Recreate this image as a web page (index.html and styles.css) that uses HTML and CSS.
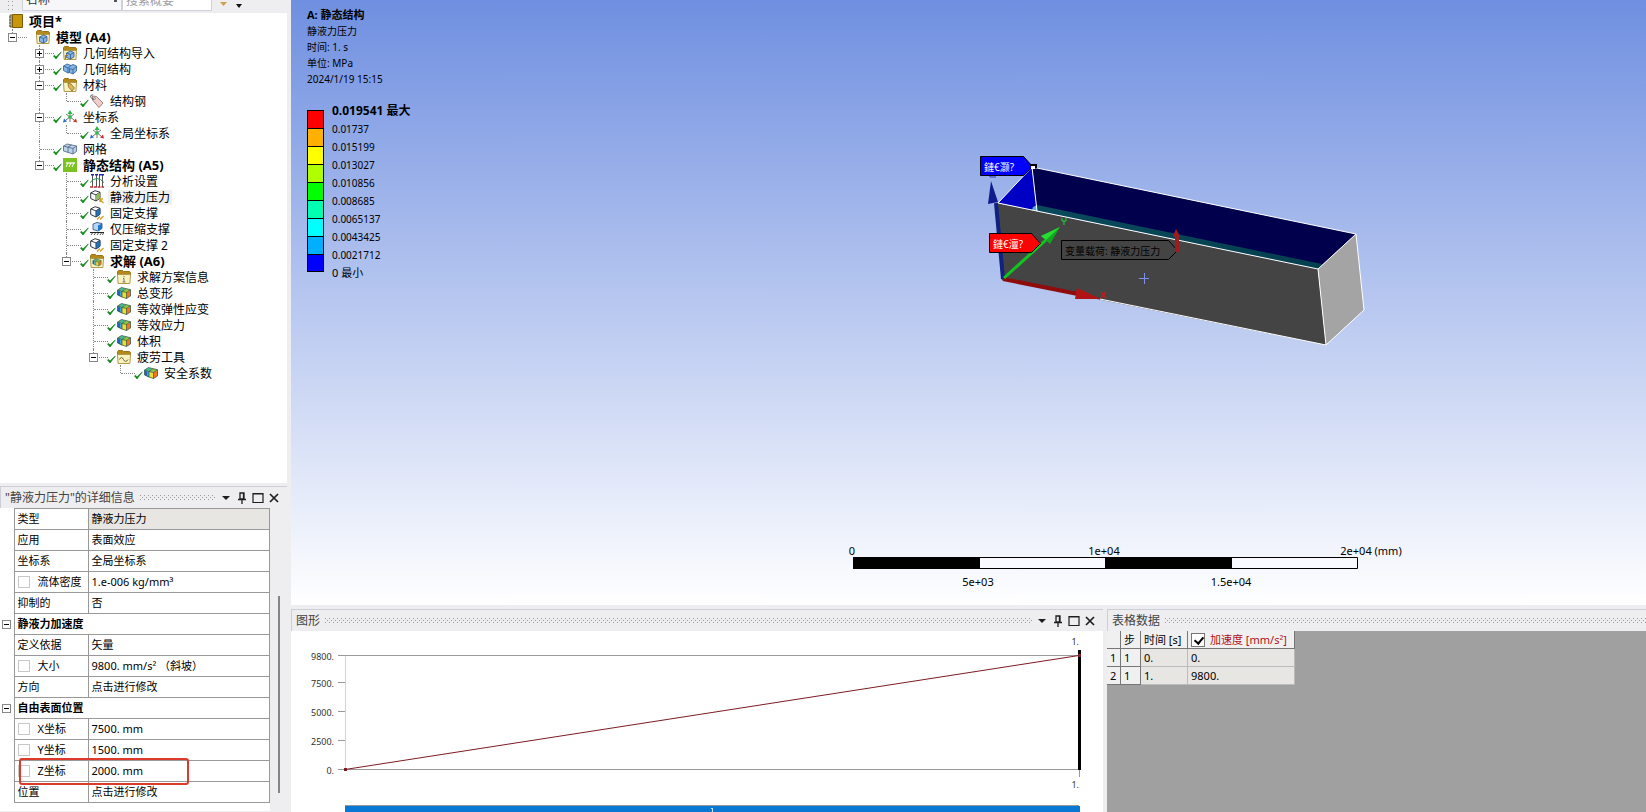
FILE: index.html
```html
<!DOCTYPE html>
<html lang="zh-CN">
<head>
<meta charset="utf-8">
<title>静态结构</title>
<link rel="stylesheet" href="styles.css">
</head>
<body>
<svg class="defs" aria-hidden="true">
  <symbol id="book" viewBox="0 0 14 14"><path d="M1 1h2v12H1z" fill="#e8dcc0" stroke="#665"/><path d="M3.500 .500h10v13h-10z" fill="#c8960a" stroke="#7a5a08"/><path d="M0 3h2M0 6h2M0 9h2M0 12h2" stroke="#555"/></symbol>
  <symbol id="folder" viewBox="0 0 14 14"><path d="M.500 5V1.500l1-1h4l1 1h6l1 1V5z" fill="#b48a1c" stroke="#9a7418"/><path d="M.500 4.500h13l-.600 9H1.100z" fill="#faf3bf" stroke="#b09a50"/></symbol>
  <symbol id="cube-mini" viewBox="0 0 14 14"><path d="M3.500 7l4-2L11 6.500v4.500L7.500 13l-4-1.500z" fill="#86b4e4" stroke="#305c91" stroke-width=".8"/><path d="M3.500 7l4 1.500L11 6.500M7.500 8.500V13" fill="none" stroke="#305c91" stroke-width=".8"/></symbol>
  <symbol id="model" viewBox="0 0 14 14"><use href="#folder"/><use href="#cube-mini"/></symbol>
  <symbol id="import" viewBox="0 0 14 14"><use href="#folder"/><use href="#cube-mini"/><path d="M2.500 13V9.500H5" fill="none" stroke="#b87818" stroke-width="1.200"/></symbol>
  <symbol id="geometry" viewBox="0 0 14 14"><path d="M.500 4L4 2l4 1.500 2-1 3.500 1.500v5L10 12 6.500 10.500 5 11 .500 8.500z" fill="#86b4e4" stroke="#305c91" stroke-width=".8"/><path d="M.500 4L5 6l3-2.500M5 6v5M6.500 6.500L10 7.500l3.500-3M10 7.500V12M6.500 6.500v4" fill="none" stroke="#305c91" stroke-width=".8"/></symbol>
  <symbol id="mesh" viewBox="0 0 14 14"><path d="M.500 4L4 2l9.500 2v5.500L10 12 .500 9z" fill="#bdd2e8" stroke="#4a6280" stroke-width=".8"/><path d="M.500 4L10 6.500l3.500-2.500M10 6.500V12M5 5v5.500M5 5l3.500-2" fill="none" stroke="#4a6280" stroke-width=".8"/></symbol>
  <symbol id="material" viewBox="0 0 14 14"><use href="#folder"/><path d="M5 5l3 1 3.500 4L9 13 5.500 9z" fill="#e0b45a" stroke="#8a6a20" stroke-width=".8"/></symbol>
  <symbol id="tag" viewBox="0 0 14 14"><path d="M2.500 2l4 .500 6.500 6.500-4 4.500L2.500 6z" fill="#eecdca" stroke="#8a6a68" stroke-width=".8"/><path d="M3 .800q-3 0-2.300 2.200T4 5.500" fill="none" stroke="#555" stroke-width=".9"/><circle cx="4.500" cy="4.500" r=".9" fill="#fff" stroke="#555" stroke-width=".6"/></symbol>
  <symbol id="axes" viewBox="0 0 14 14"><path d="M3 4l8 6M11 4l-8 6M7 3v9" stroke="#666" stroke-width=".9"/><path d="M4.500 4L7 0l2.500 4z" fill="#24b83c"/><circle cx="7" cy="7" r="1.800" fill="#24c050"/><path d="M0 12.500l1-4 3 3z" fill="#2a6fd0"/><path d="M14 12.500l-1-4-3 3z" fill="#d02a2a"/></symbol>
  <symbol id="static" viewBox="0 0 14 14"><path d="M0 0h14v14H0z" fill="#7cc222"/><path d="M3 5h9" stroke="#fff" stroke-width="1.300"/><path d="M5 5L3 9M8 5L6 9M11 5L9 9" stroke="#fff"/></symbol>
  <symbol id="settings" viewBox="0 0 14 14"><path d="M2.500 1v12M6.500 1v12M9.500 1v12M12.500 1v12" stroke="#444" stroke-width=".9"/><path d="M1 .800h3M5 .800h3M9 .800h5" stroke="#22b" stroke-width="1.500"/><path d="M0 13h14" stroke="#b33" stroke-width="1.500" stroke-dasharray="3 .8"/><path d="M0 8.500q7-8 14 0" fill="none" stroke="#2a9a4a"/></symbol>
  <symbol id="cube" viewBox="0 0 14 14"><path d="M.700 3L5 .700l5 1.500v6L6 11 .700 8.500z" fill="#fff" stroke="#303840"/><path d="M.700 3L6 4.800l4-2.600M6 4.800V11" fill="none" stroke="#303840" stroke-width=".9"/></symbol>
  <symbol id="hydro" viewBox="0 0 14 14"><use href="#cube"/><path d="M6.500 5l3-2v5l-3 2z" fill="#8dbf4a"/><path d="M13.500 13L10 9.500M10 12V9h3" fill="none" stroke="#d8a020" stroke-width="1.400"/></symbol>
  <symbol id="fixed" viewBox="0 0 14 14"><use href="#cube"/><path d="M6.300 5l3.500-2.500v6l-3.500 2z" fill="#1f74c8" stroke="#154a80" stroke-width=".7"/><path d="M7 13.500l3-3M10 13.500l3.500-3.500" stroke="#d89820" stroke-width="1.200"/></symbol>
  <symbol id="compress" viewBox="0 0 14 14"><path d="M3 2l4-1.500 5 1v5L8 9 3 7.500z" fill="#b4d8f6" stroke="#27496f" stroke-width=".8"/><path d="M8 3.500l4-2v5L8 9z" fill="#1f74c8"/><path d="M0 10.500h14" stroke="#222"/><path d="M1 13l1.500-2M4 13l1.500-2M7 13l1.500-2M10 13l1.500-2M12.500 13l1-2" stroke="#444" stroke-width=".9"/></symbol>
  <symbol id="result" viewBox="0 0 14 14"><path d="M.500 4L3 5.300v5L.500 9z" fill="#2860c8"/><path d="M3 5.300l2 .700v5.500l-2-1.200z" fill="#2fa8d8"/><path d="M.500 4L4.500 1.500 8 2.500 5 6z" fill="#48b890"/><path d="M5 5.500l4-3 4.500 1.200-4 2.800z" fill="#8cc840"/><path d="M5 5.500l4.500 1V12.500L5 11z" fill="#f0dc30"/><path d="M9.500 6.500l4-2.800V10l-4 2.500z" fill="#ee7820"/><path d="M.500 4l4-2.500 4 1 5 1.200V10l-4 2.500L5 11 .500 9zM5 11V5.500l4-3M5 5.500l4.500 1 4-2.800M9.500 6.500v6M.500 4L5 5.800" fill="none" stroke="#2c5040" stroke-width=".7"/></symbol>
  <symbol id="solution" viewBox="0 0 14 14"><use href="#folder"/><use href="#result" x="2" y="4" width="10" height="9"/></symbol>
  <symbol id="info" viewBox="0 0 14 14"><use href="#folder"/><path d="M7 6v1.300M7 8.500V12M5.500 12h3M6 8.500h1" stroke="#777" fill="none"/></symbol>
  <symbol id="fatigue" viewBox="0 0 14 14"><use href="#folder"/><path d="M2.500 9.500q2-4 4 0t4.500 0" stroke="#6a6030" fill="none"/></symbol>
  <symbol id="check" viewBox="0 0 9 9"><path d="M.500 5l2.500 3L8.300 1 3 5.800 1.500 4.300z" fill="#138a1b" stroke="#138a1b" stroke-width=".7"/></symbol>
  <symbol id="drop" viewBox="0 0 16 16"><path d="M4 6h8l-4 4z" fill="#1e1e1e"/></symbol>
  <symbol id="pin" viewBox="0 0 16 16"><path d="M6 3h4v6H6zM4 9.500h8M8 10v4M9.500 3v6" fill="none" stroke="#1e1e1e" stroke-width="1.300"/></symbol>
  <symbol id="max" viewBox="0 0 16 16"><path d="M3 3.500h10v9H3z" fill="none" stroke="#1e1e1e" stroke-width="1.200"/><path d="M3 4h10" stroke="#1e1e1e"/></symbol>
  <symbol id="close" viewBox="0 0 16 16"><path d="M4 4l8 8M12 4l-8 8" stroke="#1e1e1e" stroke-width="1.700"/></symbol>
</svg>
<div class="app">
  <aside class="side">
    <div class="toolbar">
      <span class="grip"></span>
      <select class="filter" aria-label="筛选"><option>名称</option></select>
      <input class="search" type="text" placeholder="搜索概要" aria-label="搜索概要">
      <button class="tool" aria-label="清除"><svg viewBox="0 0 16 16"><path d="M5 7h7l-3.500 4z" fill="#c9a24a"/></svg></button>
      <button class="tool" aria-label="更多"><svg viewBox="0 0 16 16"><path d="M2 9h6l-3 4z" fill="#111"/></svg></button>
    </div>
    <nav class="tree" aria-label="项目">
      <div class="row root"><svg class="ico"><use href="#book"/></svg><b>项目*</b></div>
      <ul>
        <li class="top"><div class="row"><button class="exp" aria-label="折叠"></button><svg class="ico"><use href="#model"/></svg><b>模型 (A4)</b></div>
          <ul>
            <li><div class="row"><button class="exp plus" aria-label="展开"></button><svg class="chk"><use href="#check"/></svg><svg class="ico"><use href="#import"/></svg><span>几何结构导入</span></div></li>
            <li><div class="row"><button class="exp plus" aria-label="展开"></button><svg class="chk"><use href="#check"/></svg><svg class="ico"><use href="#geometry"/></svg><span>几何结构</span></div></li>
            <li><div class="row"><button class="exp" aria-label="折叠"></button><svg class="chk"><use href="#check"/></svg><svg class="ico"><use href="#material"/></svg><span>材料</span></div>
              <ul><li><div class="row"><svg class="chk"><use href="#check"/></svg><svg class="ico"><use href="#tag"/></svg><span>结构钢</span></div></li></ul></li>
            <li><div class="row"><button class="exp" aria-label="折叠"></button><svg class="chk"><use href="#check"/></svg><svg class="ico"><use href="#axes"/></svg><span>坐标系</span></div>
              <ul><li><div class="row"><svg class="chk"><use href="#check"/></svg><svg class="ico"><use href="#axes"/></svg><span>全局坐标系</span></div></li></ul></li>
            <li><div class="row"><svg class="chk"><use href="#check"/></svg><svg class="ico"><use href="#mesh"/></svg><span>网格</span></div></li>
            <li><div class="row"><button class="exp" aria-label="折叠"></button><svg class="chk"><use href="#check"/></svg><svg class="ico"><use href="#static"/></svg><b>静态结构 (A5)</b></div>
              <ul>
                <li><div class="row"><svg class="chk"><use href="#check"/></svg><svg class="ico"><use href="#settings"/></svg><span>分析设置</span></div></li>
                <li><div class="row"><svg class="chk"><use href="#check"/></svg><svg class="ico"><use href="#hydro"/></svg><span class="sel">静液力压力</span></div></li>
                <li><div class="row"><svg class="chk"><use href="#check"/></svg><svg class="ico"><use href="#fixed"/></svg><span>固定支撑</span></div></li>
                <li><div class="row"><svg class="chk"><use href="#check"/></svg><svg class="ico"><use href="#compress"/></svg><span>仅压缩支撑</span></div></li>
                <li><div class="row"><svg class="chk"><use href="#check"/></svg><svg class="ico"><use href="#fixed"/></svg><span>固定支撑 2</span></div></li>
                <li><div class="row"><button class="exp" aria-label="折叠"></button><svg class="chk"><use href="#check"/></svg><svg class="ico"><use href="#solution"/></svg><b>求解 (A6)</b></div>
                  <ul>
                    <li><div class="row"><svg class="chk"><use href="#check"/></svg><svg class="ico"><use href="#info"/></svg><span>求解方案信息</span></div></li>
                    <li><div class="row"><svg class="chk"><use href="#check"/></svg><svg class="ico"><use href="#result"/></svg><span>总变形</span></div></li>
                    <li><div class="row"><svg class="chk"><use href="#check"/></svg><svg class="ico"><use href="#result"/></svg><span>等效弹性应变</span></div></li>
                    <li><div class="row"><svg class="chk"><use href="#check"/></svg><svg class="ico"><use href="#result"/></svg><span>等效应力</span></div></li>
                    <li><div class="row"><svg class="chk"><use href="#check"/></svg><svg class="ico"><use href="#result"/></svg><span>体积</span></div></li>
                    <li><div class="row"><button class="exp" aria-label="折叠"></button><svg class="chk"><use href="#check"/></svg><svg class="ico"><use href="#fatigue"/></svg><span>疲劳工具</span></div>
                      <ul><li><div class="row"><svg class="chk"><use href="#check"/></svg><svg class="ico"><use href="#result"/></svg><span>安全系数</span></div></li></ul></li>
                  </ul></li>
              </ul></li>
          </ul></li>
      </ul>
    </nav>
    <section class="details">
      <header class="bar"><h2>"静液力压力"的详细信息</h2><span class="dots"></span>
        <button aria-label="菜单"><svg><use href="#drop"/></svg></button><button aria-label="固定"><svg><use href="#pin"/></svg></button><button aria-label="最大化"><svg><use href="#max"/></svg></button><button aria-label="关闭"><svg><use href="#close"/></svg></button></header>
      <div class="props-wrap">
        <table class="props">
          <tr><td class="gut"></td><th>类型</th><td class="ro">静液力压力</td></tr>
          <tr><td class="gut"></td><th>应用</th><td>表面效应</td></tr>
          <tr><td class="gut"></td><th>坐标系</th><td>全局坐标系</td></tr>
          <tr><td class="gut"></td><th><label><input type="checkbox">流体密度</label></th><td>1.e-006 kg/mm³</td></tr>
          <tr><td class="gut"></td><th>抑制的</th><td>否</td></tr>
          <tr><td class="gut"><button class="exp" aria-label="折叠"></button></td><th class="group" colspan="2">静液力加速度</th></tr>
          <tr><td class="gut"></td><th>定义依据</th><td>矢量</td></tr>
          <tr><td class="gut"></td><th><label><input type="checkbox">大小</label></th><td>9800. mm/s² （斜坡）</td></tr>
          <tr><td class="gut"></td><th>方向</th><td>点击进行修改</td></tr>
          <tr><td class="gut"><button class="exp" aria-label="折叠"></button></td><th class="group" colspan="2">自由表面位置</th></tr>
          <tr><td class="gut"></td><th><label><input type="checkbox">X坐标</label></th><td>7500. mm</td></tr>
          <tr><td class="gut"></td><th><label><input type="checkbox">Y坐标</label></th><td>1500. mm</td></tr>
          <tr><td class="gut"></td><th class="marked"><label><input type="checkbox">Z坐标</label></th><td>2000. mm</td></tr>
          <tr><td class="gut"></td><th>位置</th><td>点击进行修改</td></tr>
        </table>
        <div class="scroll"><span></span></div>
      </div>
    </section>
  </aside>
  <main class="main">
    <section class="view">
      <svg class="scene" viewBox="291 0 1355 605" role="img" aria-label="静液力压力">
        <defs><linearGradient id="teal" x1="0" x2="1"><stop offset="0" stop-color="#0a4a5c"/><stop offset="1" stop-color="#04404e"/></linearGradient></defs>
        <path d="M1032 167L1356 234 1318 269 1037 211z" fill="#00004c"/>
        <path d="M1037 205L1322 264 1318 269 1037 211z" fill="url(#teal)"/>
        <path d="M1032 167L998 203 1037 211z" fill="#0000c4"/>
        <path d="M1033 207l4-2v6l-5-1z" fill="#58a8d8"/>
        <path d="M997 203L1318 269 1326 345 1002 280z" fill="#444"/>
        <path d="M1318 269L1356 234 1364 310 1326 345z" fill="#a4a4a4"/>
        <path d="M998 203L1032 167 1356 234 1318 269zM1318 269L1326 345 1364 310 1356 234M1326 345L1100 299M1032 167L1037 211" fill="none" stroke="#fff"/>
        <path d="M1003 279L996 203" stroke="#12207e" stroke-width="4"/>
        <path d="M991 181L988 204 998 202z" fill="#101c8c"/>
        <path d="M990 174v3h6" stroke="#2038c8" fill="none"/>
        <path d="M1003 279L1078 294" stroke="#8e0c0c" stroke-width="4"/>
        <path d="M1077 288L1101 299 1075 299z" fill="#b01414"/>
        <path d="M1004 278L1046 240" stroke="#12c420" stroke-width="3"/>
        <path d="M1041 236L1060 227 1050 244z" fill="#0fa81c"/><path d="M1041 236L1060 227 1046 240z" fill="#28dc34"/>
        <path d="M1062 218v3h4v-3M1064 221v4" fill="none" stroke="#20d038"/>
        <path d="M1101 292l5 6M1106 292l-5 6" stroke="#c01c1c" stroke-width="1.500"/>
        <path d="M1061.500 240.500h107l9 10-9 9h-107z" fill="#444" stroke="#000"/>
        <text x="1065" y="255" class="note">变量载荷: 静液力压力</text>
        <path d="M1176 229l-3 7 2 1v15h4v-15l1-1z" fill="#9c1c20"/>
        <path d="M980.500 156.500h43l9 10-9 9h-43z" fill="#00f" stroke="#000"/>
        <path d="M1030 165h6v3" stroke="#000" stroke-width="2" fill="none"/><path d="M1031 166h4v3h-4z" fill="#fff"/>
        <text x="984" y="171" class="flag">鏈€灏?</text>
        <path d="M989.500 233.500h42l9 10-9 9h-42z" fill="#f00" stroke="#000"/>
        <text x="993" y="248" class="flag">鏈€澶?</text>
        <path d="M1139 278.500h10M1144.500 273v11" stroke="#7c92e8"/>
        <path d="M853.500 557.500h504v11h-504z" fill="#f8faff" stroke="#000"/>
        <path d="M853 557h127v12H853zM1105 557h127v12h-127z"/>
        <g class="rule"><text x="852" y="555">0</text><text x="1104" y="555">1e+04</text><text x="1371" y="555">2e+04 (mm)</text><text x="978" y="586">5e+03</text><text x="1231" y="586">1.5e+04</text></g>
      </svg>
      <div class="info">
        <p class="strong">A: 静态结构</p><p>静液力压力</p><p>时间: 1. s</p><p>单位: MPa</p><p>2024/1/19 15:15</p>
        <div class="legend">
          <div class="swatches"><i class="c1"></i><i class="c2"></i><i class="c3"></i><i class="c4"></i><i class="c5"></i><i class="c6"></i><i class="c7"></i><i class="c8"></i><i class="c9"></i></div>
          <ul><li class="top-value">0.019541 最大</li><li>0.01737</li><li>0.015199</li><li>0.013027</li><li>0.010856</li><li>0.008685</li><li>0.0065137</li><li>0.0043425</li><li>0.0021712</li><li class="min">0 最小</li></ul>
        </div>
      </div>
    </section>
    <div class="bottom">
      <section class="graph">
        <header class="bar"><h2>图形</h2><span class="dots"></span>
          <button aria-label="菜单"><svg><use href="#drop"/></svg></button><button aria-label="固定"><svg><use href="#pin"/></svg></button><button aria-label="最大化"><svg><use href="#max"/></svg></button><button aria-label="关闭"><svg><use href="#close"/></svg></button></header>
        <svg class="plot" viewBox="291 631 812 181" role="img" aria-label="加速度">
          <path d="M345.500 655v115" stroke="#d4d4d4"/>
          <path d="M338 655.500h742M338 682.500h7M338 711.500h7M338 740.500h7M338 769.500h742M1079.500 769v8" stroke="#999" fill="none"/>
          <path d="M1079.500 650v120" stroke="#000" stroke-width="3"/>
          <path d="M345 769.500L1079 655.500" stroke="#7c1c24"/>
          <path d="M344 768h3v3h-3zM1078 654h3v3h-3z" fill="#7c1c24"/>
          <g class="ylab"><text x="334" y="660">9800.</text><text x="334" y="687">7500.</text><text x="334" y="716">5000.</text><text x="334" y="745">2500.</text><text x="334" y="774">0.</text><text x="1079" y="645">1.</text><text x="1079" y="788">1.</text></g>
          <path d="M345 806h735v6H345z" fill="#0878d4"/>
          <path d="M345 805.500h734" stroke="#9a9a9a"/>
          <path d="M712.500 808v4M711 809l1-1" stroke="#cfe4f8"/>
        </svg>
      </section>
      <section class="data">
        <header class="bar"><h2>表格数据</h2><span class="dots"></span></header>
        <div class="data-body">
          <table class="grid">
            <tr><th></th><th>步</th><th>时间 [s]</th><th class="acc"><label><input type="checkbox" checked>加速度 [mm/s²]</label></th></tr>
            <tr><th>1</th><th>1</th><td>0.</td><td>0.</td></tr>
            <tr><th>2</th><th>1</th><td>1.</td><td>9800.</td></tr>
          </table>
        </div>
      </section>
    </div>
  </main>
</div>
</body>
</html>
```
FILE: styles.css
```css
* { box-sizing: border-box; }
body { margin: 0; background: #eeeef0; color: #000; font: 12px/16px "Noto Sans", "Noto Sans CJK SC", sans-serif; }
ul, p, h2 { margin: 0; padding: 0; list-style: none; font-size: inherit; font-weight: normal; }
button { margin: 0; padding: 0; border: 0; background: none; font: inherit; color: inherit; }
svg { display: block; }
.defs { position: absolute; width: 0; height: 0; }
.app { display: grid; grid-template-columns: 287px 1fr; column-gap: 4px; height: 100vh; overflow: hidden; }

.side { display: grid; grid-template-rows: 13px 1fr 329px; min-height: 0; }
.toolbar { display: flex; align-items: flex-end; padding: 0 0 2px 8px; background: #eeeef0; overflow: hidden; }
.grip { width: 8px; height: 10px; margin-right: 6px; background: conic-gradient(from 270deg at 1px 1px, #999 90deg, transparent 0) 0 0 / 4px 4px; }
.filter, .search { height: 22px; padding: 0 3px; border: 1px solid #cfd0da; border-radius: 0; background: #f7f7f9; font: inherit; }
.filter { width: 100px; appearance: none; background: linear-gradient(#555, #555) 91px 9px / 3px 3px no-repeat #f7f7f9; color: #333; }
.search { width: 90px; background: #fff; }
.search::placeholder { color: #a0a0a4; opacity: 1; }
.tool { width: 16px; height: 16px; margin-left: 3px; }
.tool svg { width: 16px; height: 16px; }

.tree { background: #fff; overflow: hidden; }
.tree > ul { padding-left: 8px; }
.tree li { position: relative; }
.tree li ul { padding-left: 27px; }
.tree li::before { content: ""; position: absolute; left: 4px; top: 0; height: 100%; border-left: 1px dotted #888; }
.tree li:last-child::before { height: 8px; }
.row { position: relative; display: flex; align-items: center; height: 16px; padding-left: 28px; white-space: nowrap; }
.row::before { content: ""; position: absolute; left: 5px; top: 8px; width: 14px; border-top: 1px dotted #888; }
.root { padding-left: 9px; }
.root::before { display: none; }
.row .exp { position: absolute; left: 0; top: 4px; }
.exp { display: block; width: 9px; height: 9px; border: 1px solid #888; background: #fff linear-gradient(#000, #000) center / 5px 1px no-repeat; }
.plus { background: linear-gradient(#000, #000) center / 5px 1px no-repeat, linear-gradient(#000, #000) center / 1px 5px no-repeat #fff; }
.chk { position: absolute; left: 18px; top: 6px; width: 9px; height: 9px; }
.ico { width: 14px; height: 14px; margin-right: 4px; flex: none; }
.row b, .row span { padding: 0 2px; line-height: 15px; }
.row b { font-size: 13px; }
.row .sel { background: #f0f0f0; }

.bar { display: flex; align-items: center; height: 22px; padding: 0 5px 0 4px; border: solid #ccced8; border-width: 1px 0 0 1px; background: #eeeef0; color: #444; }
.bar h2 { white-space: nowrap; }
.bar button, .bar button svg { width: 16px; height: 16px; }
.dots { flex: 1; height: 6px; margin: 0 2px 0 5px; background: conic-gradient(from 270deg at 1px 1px, #999 90deg, transparent 0) 0 0 / 4px 4px, conic-gradient(from 270deg at 1px 1px, #999 90deg, transparent 0) 2px 2px / 4px 4px; }
.details { padding-top: 3px; background: #eeeef0; }
.props-wrap { display: grid; grid-template-columns: 1fr 17px; height: 303px; background: #fff; }
.props { width: 100%; border-collapse: collapse; table-layout: fixed; font-size: 11px; line-height: 16px; align-self: start; }
.props th, .props td { height: 21px; padding: 0 3px; border: 1px solid #999; text-align: left; font-weight: normal; white-space: nowrap; }
.props th { width: 74px; }
.props .gut { width: 14px; padding: 0 0 0 2px; border: 0; border-right: 1px solid #999; }
.props .group { font-weight: bold; }
.props .ro { background: #e8e6e3; }
.props label { display: flex; align-items: center; gap: 8px; }
.props input { appearance: none; width: 12px; height: 12px; margin: 0; border: 1px solid #c8c8c8; background: #fff; }
.props .marked { position: relative; }
.marked::after { content: ""; position: absolute; left: 4px; top: -3px; width: 168px; height: 23px; max-width: 168px; border: 2px solid #de3a2c; border-radius: 3px; z-index: 1; width: 166px; }
.scroll { padding: 88px 0 18px 8px; background: #eeeef0; }
.scroll span { display: block; width: 2px; height: 100%; background: #858585; }

.main { display: grid; grid-template-rows: 1fr 207px; min-width: 0; min-height: 0; }
.view { position: relative; background: linear-gradient(#6f8fe0, #fff); overflow: hidden; }
.scene { position: absolute; inset: 0; width: 100%; height: 100%; }
.scene text { font-size: 10px; }
.scene .flag { fill: #fff; }
.scene .rule text { font-size: 11px; text-anchor: middle; }
.info { position: relative; padding: 7px 16px; font-size: 10px; }
.info .strong { font-weight: bold; font-size: 11px; }
.legend { display: flex; gap: 8px; padding-top: 15px; }
.legend li { height: 18px; line-height: 18px; }
.legend .min { font-size: 11px; }
.legend .top-value { font-size: 12px; font-weight: bold; }
.swatches { width: 17px; height: 162px; margin-top: 8px; border: solid #000; border-width: 1px 1px 0; }
.swatches i { display: block; height: 18px; border-bottom: 1px solid #000; }
.swatches .c9 { height: 17px; }
.c1 { background: #f00; } .c2 { background: #ffb000; } .c3 { background: #ff0; }
.c4 { background: #b0ff00; } .c5 { background: #0f0; } .c6 { background: #00ffb0; }
.c7 { background: #0ff; } .c8 { background: #00b0ff; } .c9 { background: #00f; }

.bottom { display: grid; grid-template-columns: 812fr 539fr; column-gap: 4px; padding-top: 4px; background: #eeeef0; }
.graph, .data { display: flex; flex-direction: column; min-width: 0; }
.graph { background: #fff; }
.plot { width: 100%; }
.ylab text { font-size: 9px; fill: #333; text-anchor: end; }
.data .bar { padding-right: 0; }
.data .dots { margin-right: 0; }
.data-body { flex: 1; background: #a0a0a0; }
.grid { border-collapse: separate; border-spacing: 0; font-size: 11px; }
.grid th, .grid td { height: 18px; padding: 0 3px; border: solid #bbb; border-width: 0 1px 1px 0; background: #e8e6e3; font-weight: normal; text-align: left; white-space: nowrap; line-height: 16px; }
.grid th { border-color: #777; background: #f0f0f0; }
.grid th:first-child { width: 14px; }
.grid th:nth-child(2) { width: 20px; }
.grid th:nth-child(3) { width: 47px; }
.grid .acc { width: 107px; color: #b01018; }
.acc label { display: flex; align-items: center; gap: 5px; }
.acc input { appearance: none; width: 14px; height: 14px; margin: 0; border: 1px solid #777; background: #fff; }
.acc input:checked::before { content: ""; display: block; width: 4px; height: 7px; margin: 1px 0 0 4px; border: solid #000; border-width: 0 2px 2px 0; transform: rotate(40deg); }
```
